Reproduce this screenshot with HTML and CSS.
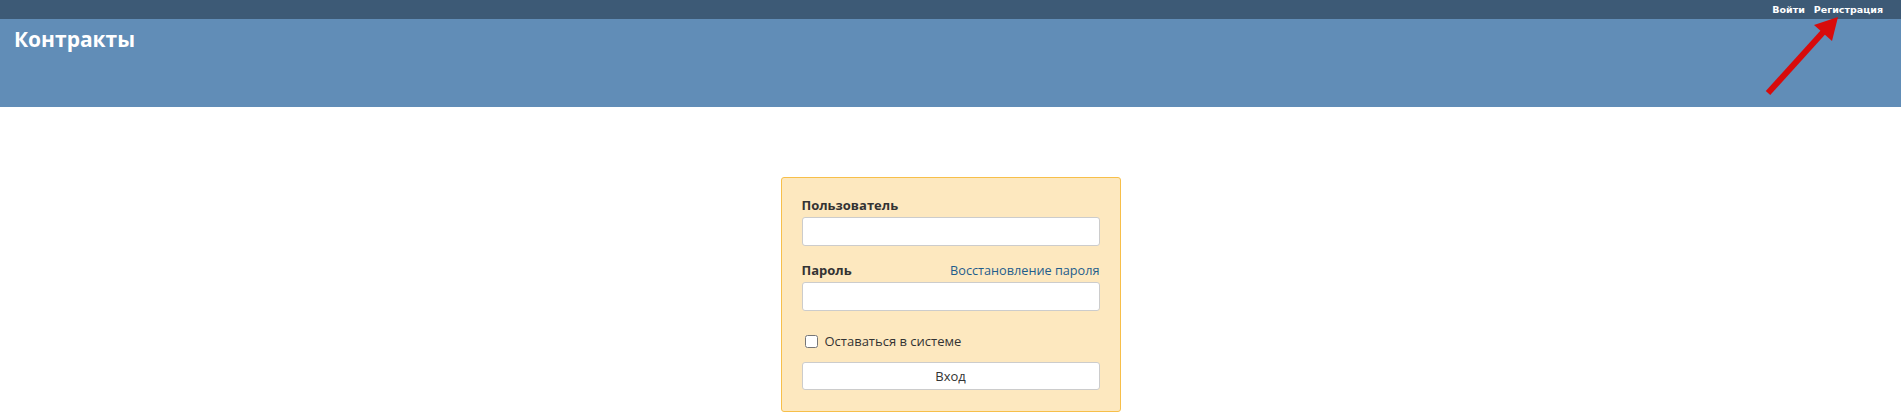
FILE: index.html
```html
<!DOCTYPE html>
<html lang="ru">
<head>
    <meta charset="UTF-8">
    <meta name="viewport" content="width=device-width, initial-scale=1.0">
    <title>Контракты</title>
    <link rel="stylesheet" href="styles.css">
</head>
<body>
    <div class="topbar">
        <a href="#">Войти</a>
        <a href="#">Регистрация</a>
    </div>

    <header class="header">
        <h1>Контракты</h1>
    </header>

    <main class="page">
        <form class="login-card">
            <div class="field">
                <div class="field-head">
                    <label for="user">Пользователь</label>
                </div>
                <input type="text" id="user">
            </div>
            <div class="field">
                <div class="field-head">
                    <label for="pass">Пароль</label>
                    <a href="#" class="restore">Восстановление пароля</a>
                </div>
                <input type="password" id="pass">
            </div>
            <label class="remember">
                <input type="checkbox">
                <span>Оставаться в системе</span>
            </label>
            <button type="button" class="submit">Вход</button>
        </form>
    </main>

    <!-- pointer to the registration link -->
    <svg class="arrow" width="90" height="100" viewBox="0 0 90 100">
        <line x1="8" y1="92" x2="66" y2="28" stroke="#d80b0b" stroke-width="6"/>
        <polygon points="78,16 54,24 72,40" fill="#d80b0b"/>
    </svg>
</body>
</html>
```

FILE: styles.css
```css
body {
    margin: 0;
    padding: 0;
    font-family: "Open Sans", "Noto Sans", sans-serif;
    color: #333;
    background-color: #fff;
}
.topbar {
    height: 19px;
    background-color: #3d5a76;
    display: flex;
    justify-content: flex-end;
    align-items: center;
    gap: 9px;
    padding-right: 18px;
}
.topbar a {
    color: #fff;
    font-family: "DejaVu Sans", sans-serif;
    font-size: 9.5px;
    font-weight: bold;
    text-decoration: none;
}
.header {
    height: 88px;
    background-color: #618db7;
    padding: 0 14px;
}
.header h1 {
    margin: 0;
    padding-top: 5px;
    font-size: 21px;
    line-height: 30px;
    font-weight: bold;
    color: #fff;
}
.page {
    display: flex;
    justify-content: center;
    padding-top: 70px;
}
.login-card {
    width: 340px;
    box-sizing: border-box;
    background-color: #fde8bf;
    border: 1px solid #f7bf4a;
    border-radius: 3px;
    padding: 18px 20px 21px;
}
.field {
    margin-bottom: 15px;
}
.field-head {
    display: flex;
    justify-content: space-between;
    align-items: baseline;
    line-height: 18px;
    margin-bottom: 3px;
}
.field-head label {
    font-size: 13px;
    font-weight: bold;
    color: #333;
}
.restore {
    font-size: 12.7px;
    color: #1f5d8c;
    text-decoration: none;
}
.field input {
    display: block;
    width: 100%;
    height: 29px;
    box-sizing: border-box;
    border: 1px solid #ccc;
    border-radius: 3px;
    background-color: #fff;
}
.remember {
    display: flex;
    align-items: center;
    gap: 7px;
    font-size: 13px;
    color: #333;
    margin: 22px 0 13px 3px;
    line-height: 16px;
}
.remember input {
    width: 13px;
    height: 13px;
    margin: 0;
}
.submit {
    display: block;
    width: 100%;
    height: 28px;
    border: 1px solid #ccc;
    border-radius: 3px;
    background-color: #fff;
    font-family: "Open Sans", "Noto Sans", sans-serif;
    font-size: 13px;
    color: #333;
}
.arrow {
    position: absolute;
    left: 1760px;
    top: 1px;
}
```
